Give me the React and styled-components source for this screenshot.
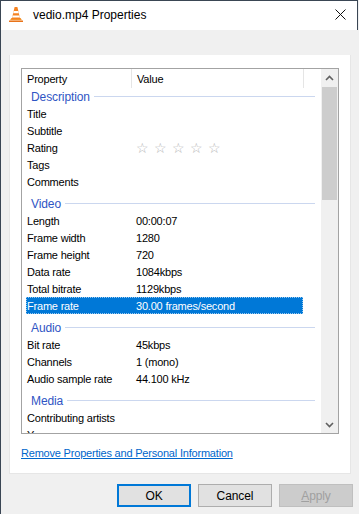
import React from "react";
import styled, { createGlobalStyle } from "styled-components";

const Global = createGlobalStyle`
  html, body { margin: 0; padding: 0; background: #f0f0f0; }
  body { font-family: "Liberation Sans", Arial, sans-serif; }
`;

const sections = [
  {
    title: "Description",
    rows: [
      ["Title", ""],
      ["Subtitle", ""],
      ["Rating", "stars"],
      ["Tags", ""],
      ["Comments", ""],
    ],
  },
  {
    title: "Video",
    rows: [
      ["Length", "00:00:07"],
      ["Frame width", "1280"],
      ["Frame height", "720"],
      ["Data rate", "1084kbps"],
      ["Total bitrate", "1129kbps"],
      ["Frame rate", "30.00 frames/second", true],
    ],
  },
  {
    title: "Audio",
    rows: [
      ["Bit rate", "45kbps"],
      ["Channels", "1 (mono)"],
      ["Audio sample rate", "44.100 kHz"],
    ],
  },
  {
    title: "Media",
    rows: [
      ["Contributing artists", ""],
      ["Year", ""],
    ],
  },
];

const VlcIcon = () => (
  <svg width="16" height="17" viewBox="0 0 16 17">
    <path d="M1 14.5 L15 14.5 L15 16 L1 16 Z" fill="#e8731a" />
    <path d="M2 14.2 L14 14.2 L12.6 12 L3.4 12 Z" fill="#f29430" />
    <path d="M6.6 1 L9.4 1 L12.2 13 L3.8 13 Z" fill="#f58220" />
    <path d="M5.7 5 L10.3 5 L10.8 7.2 L5.2 7.2 Z" fill="#fff" />
    <path d="M4.6 9.6 L11.4 9.6 L11.9 11.6 L4.1 11.6 Z" fill="#fff" />
  </svg>
);

const CloseIcon = () => (
  <svg width="11" height="11" viewBox="0 0 11 11">
    <path d="M0.5 0.5 L10.5 10.5 M10.5 0.5 L0.5 10.5" stroke="#111" strokeWidth="1" />
  </svg>
);

const Chevron = ({ down }) => (
  <svg width="9" height="6" viewBox="0 0 9 6">
    <path
      d={down ? "M1 1 L4.5 4.5 L8 1" : "M1 5 L4.5 1.5 L8 5"}
      stroke="#606060"
      strokeWidth="1.6"
      fill="none"
    />
  </svg>
);

export default function App() {
  return (
    <Window>
      <Global />
      <TitleBar>
        <VlcIcon />
        <Title>vedio.mp4 Properties</Title>
        <CloseBtn>
          <CloseIcon />
        </CloseBtn>
      </TitleBar>
      <Body>
        <Panel>
          <ListBox>
            <ListMain>
              <Header>
                <HeadCell w="110px">Property</HeadCell>
                <HeadCell w="172px" pad="5px">Value</HeadCell>
              </Header>
              <Rows>
                {sections.map((s, i) => (
                  <React.Fragment key={s.title}>
                    <Group first={i === 0}>
                      <GroupLabel>{s.title}</GroupLabel>
                      <GroupLine />
                    </Group>
                    {s.rows.map(([k, v, sel]) => (
                      <Row key={k} selected={sel}>
                        <Key>{k}</Key>
                        <Val>
                          {v === "stars" ? <Stars>☆ ☆ ☆ ☆ ☆</Stars> : v}
                        </Val>
                      </Row>
                    ))}
                  </React.Fragment>
                ))}
              </Rows>
            </ListMain>
            <ScrollBar>
              <ScrollBtn>
                <Chevron />
              </ScrollBtn>
              <Track>
                <Thumb />
              </Track>
              <ScrollBtn>
                <Chevron down />
              </ScrollBtn>
            </ScrollBar>
          </ListBox>
          <Link>Remove Properties and Personal Information</Link>
        </Panel>
        <Buttons>
          <Button primary>OK</Button>
          <Button>Cancel</Button>
          <Button disabled>
            <u>A</u>pply
          </Button>
        </Buttons>
      </Body>
    </Window>
  );
}

const Window = styled.div`
  width: 359px;
  height: 514px;
  box-sizing: border-box;
  border-left: 1px solid #3a4654;
  display: flex;
  flex-direction: column;
  background: #f0f0f0;
  overflow: hidden;
`;

const TitleBar = styled.div`
  height: 30px;
  box-sizing: border-box;
  border-top: 1px solid #3a4654;
  border-right: 1px solid #3a4654;
  margin-right: 1px;
  background: #fff;
  display: flex;
  align-items: center;
  padding: 0 0 2px 7px;
  gap: 9px;
`;

const Title = styled.div`
  font-size: 12px;
  color: #000;
  flex: 1;
`;

const CloseBtn = styled.div`
  width: 30px;
  display: flex;
  justify-content: center;
  margin-right: 2px;
`;

const Body = styled.div`
  flex: 1;
  display: flex;
  flex-direction: column;
  padding: 25px 0 0 8px;
`;

const Panel = styled.div`
  width: 342px;
  height: 419px;
  box-sizing: border-box;
  background: #fff;
  border: 1px solid #e6e6e6;
  border-top: none;
  padding: 13px 0 0 11px;
  display: flex;
  flex-direction: column;
`;

const ListBox = styled.div`
  width: 318px;
  height: 366px;
  box-sizing: border-box;
  border: 1px solid #a3a3a3;
  display: flex;
  overflow: hidden;
`;

const ListMain = styled.div`
  flex: 1;
  display: flex;
  flex-direction: column;
  overflow: hidden;
`;

const Header = styled.div`
  height: 19px;
  display: flex;
  flex-shrink: 0;
  font-size: 11px;
  letter-spacing: -0.2px;
  color: #000;
`;

const HeadCell = styled.div`
  width: ${(p) => p.w};
  box-sizing: border-box;
  padding-left: ${(p) => p.pad || "5px"};
  border-right: 1px solid #e5e5e5;
  display: flex;
  align-items: center;
`;

const Rows = styled.div`
  flex: 1;
  overflow: hidden;
`;

const Group = styled.div`
  height: 17px;
  margin-top: ${(p) => (p.first ? "0" : "5px")};
  display: flex;
  align-items: center;
  padding-left: 9px;
  padding-right: 6px;
  gap: 4px;
`;

const GroupLabel = styled.span`
  font-size: 12px;
  letter-spacing: -0.1px;
  color: #2f55c4;
`;

const GroupLine = styled.div`
  flex: 1;
  height: 1px;
  background: #cbd7ef;
`;

const Row = styled.div`
  height: 17px;
  margin-left: 4px;
  width: 277px;
  box-sizing: border-box;
  display: grid;
  grid-template-columns: 105px 1fr;
  align-items: center;
  font-size: 11px;
  letter-spacing: -0.2px;
  color: ${(p) => (p.selected ? "#fff" : "#000")};
  background: ${(p) => (p.selected ? "#0078d7" : "transparent")};
  outline: ${(p) => (p.selected ? "1px dotted #99c9ef" : "none")};
  outline-offset: -1px;
`;

const Key = styled.div`
  padding-left: 1px;
  white-space: nowrap;
`;

const Val = styled.div`
  padding-left: 5px;
  white-space: nowrap;
`;

const Stars = styled.span`
  font-family: "DejaVu Sans", sans-serif;
  font-size: 14px;
  color: #b5b5b5;
  letter-spacing: 0.5px;
`;

const ScrollBar = styled.div`
  width: 17px;
  background: #f0f0f0;
  display: flex;
  flex-direction: column;
`;

const ScrollBtn = styled.div`
  height: 17px;
  display: flex;
  align-items: center;
  justify-content: center;
`;

const Track = styled.div`
  flex: 1;
  padding: 1px 1px 0;
`;

const Thumb = styled.div`
  height: 113px;
  background: #cdcdcd;
`;

const Link = styled.div`
  margin-top: 13px;
  font-size: 11px;
  letter-spacing: -0.2px;
  color: #0066cc;
  text-decoration: underline;
  width: fit-content;
`;

const Buttons = styled.div`
  display: flex;
  justify-content: flex-end;
  gap: 7px;
  padding: 10px 6px 0 0;
`;

const Button = styled.div`
  width: 74px;
  height: 23px;
  box-sizing: border-box;
  display: flex;
  align-items: center;
  justify-content: center;
  font-size: 12px;
  letter-spacing: -0.1px;
  background: ${(p) => (p.disabled ? "#cccccc" : "#e1e1e1")};
  color: ${(p) => (p.disabled ? "#a0a0a0" : "#000")};
  border: ${(p) =>
    p.primary
      ? "2px solid #0078d7"
      : p.disabled
      ? "1px solid #bfbfbf"
      : "1px solid #adadad"};
`;
